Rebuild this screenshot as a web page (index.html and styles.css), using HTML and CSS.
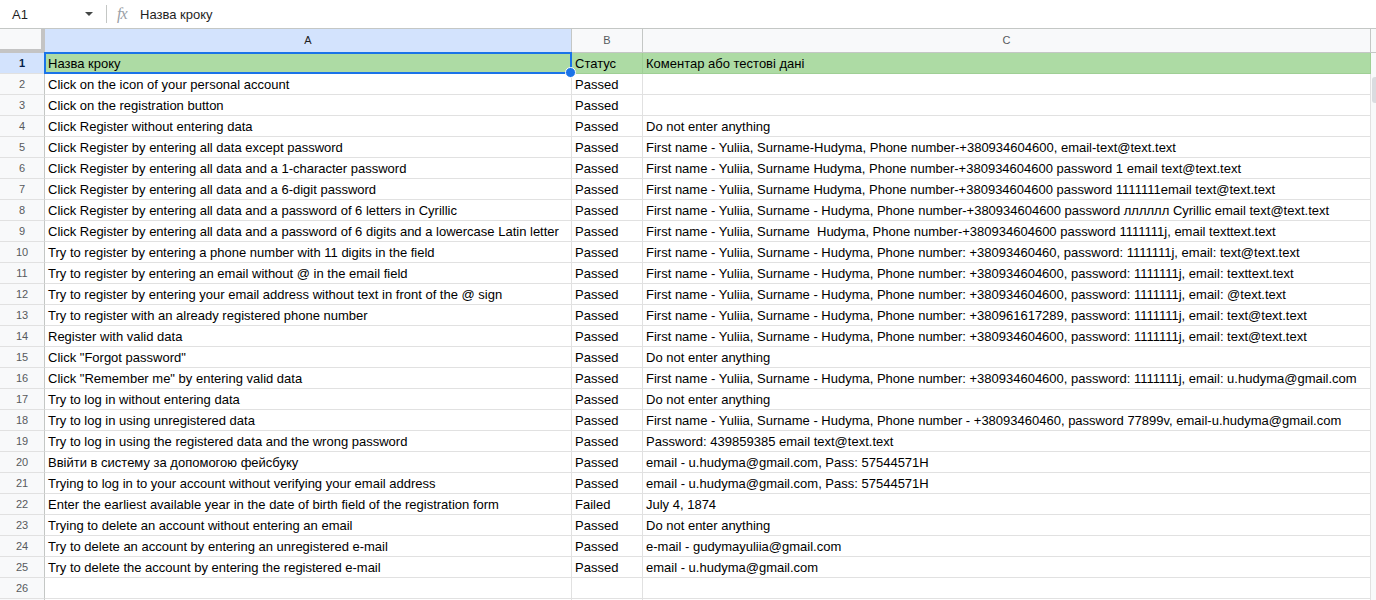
FILE: index.html
```html
<!DOCTYPE html>
<html lang="uk">
<head>
<meta charset="utf-8">
<title>Sheet</title>
<link rel="stylesheet" href="styles.css">
</head>
<body>
<div class="formula-bar">
  <div class="namebox"><span class="ref">A1</span><span class="caret"></span></div>
  <div class="sep"></div>
  <div class="fx">fx</div>
  <div class="formula">Назва кроку</div>
</div>
<div class="sheet">
  <div class="grid">
    <div class="corner"></div>
    <div class="colhead sel">A</div>
    <div class="colhead">B</div>
    <div class="colhead">C</div>

    <div class="rowhead sel">1</div>
    <div class="cell green a1">Назва кроку</div>
    <div class="cell green">Статус</div>
    <div class="cell green">Коментар або тестові дані</div>

    <div class="rowhead">2</div><div class="cell">Click on the icon of your personal account</div><div class="cell">Passed</div><div class="cell"></div>
    <div class="rowhead">3</div><div class="cell">Click on the registration button</div><div class="cell">Passed</div><div class="cell"></div>
    <div class="rowhead">4</div><div class="cell">Click Register without entering data</div><div class="cell">Passed</div><div class="cell">Do not enter anything</div>
    <div class="rowhead">5</div><div class="cell">Click Register by entering all data except password</div><div class="cell">Passed</div><div class="cell">First name - Yuliia, Surname-Hudyma, Phone number-+380934604600, email-text@text.text</div>
    <div class="rowhead">6</div><div class="cell">Click Register by entering all data and a 1-character password</div><div class="cell">Passed</div><div class="cell">First name - Yuliia, Surname Hudyma, Phone number-+380934604600 password 1 email text@text.text</div>
    <div class="rowhead">7</div><div class="cell">Click Register by entering all data and a 6-digit password</div><div class="cell">Passed</div><div class="cell">First name - Yuliia, Surname Hudyma, Phone number-+380934604600 password 1111111email text@text.text</div>
    <div class="rowhead">8</div><div class="cell">Click Register by entering all data and a password of 6 letters in Cyrillic</div><div class="cell">Passed</div><div class="cell">First name - Yuliia, Surname - Hudyma, Phone number-+380934604600 password лллллл Cyrillic email text@text.text</div>
    <div class="rowhead">9</div><div class="cell">Click Register by entering all data and a password of 6 digits and a lowercase Latin letter</div><div class="cell">Passed</div><div class="cell">First name - Yuliia, Surname  Hudyma, Phone number-+380934604600 password 1111111j, email texttext.text</div>
    <div class="rowhead">10</div><div class="cell">Try to register by entering a phone number with 11 digits in the field</div><div class="cell">Passed</div><div class="cell">First name - Yuliia, Surname - Hudyma, Phone number: +38093460460, password: 1111111j, email: text@text.text</div>
    <div class="rowhead">11</div><div class="cell">Try to register by entering an email without @ in the email field</div><div class="cell">Passed</div><div class="cell">First name - Yuliia, Surname - Hudyma, Phone number: +380934604600, password: 1111111j, email: texttext.text</div>
    <div class="rowhead">12</div><div class="cell">Try to register by entering your email address without text in front of the @ sign</div><div class="cell">Passed</div><div class="cell">First name - Yuliia, Surname - Hudyma, Phone number: +380934604600, password: 1111111j, email: @text.text</div>
    <div class="rowhead">13</div><div class="cell">Try to register with an already registered phone number</div><div class="cell">Passed</div><div class="cell">First name - Yuliia, Surname - Hudyma, Phone number: +380961617289, password: 1111111j, email: text@text.text</div>
    <div class="rowhead">14</div><div class="cell">Register with valid data</div><div class="cell">Passed</div><div class="cell">First name - Yuliia, Surname - Hudyma, Phone number: +380934604600, password: 1111111j, email: text@text.text</div>
    <div class="rowhead">15</div><div class="cell">Click "Forgot password"</div><div class="cell">Passed</div><div class="cell">Do not enter anything</div>
    <div class="rowhead">16</div><div class="cell">Click "Remember me" by entering valid data</div><div class="cell">Passed</div><div class="cell">First name - Yuliia, Surname - Hudyma, Phone number: +380934604600, password: 1111111j, email: u.hudyma@gmail.com</div>
    <div class="rowhead">17</div><div class="cell">Try to log in without entering data</div><div class="cell">Passed</div><div class="cell">Do not enter anything</div>
    <div class="rowhead">18</div><div class="cell">Try to log in using unregistered data</div><div class="cell">Passed</div><div class="cell">First name - Yuliia, Surname - Hudyma, Phone number - +38093460460, password 77899v, email-u.hudyma@gmail.com</div>
    <div class="rowhead">19</div><div class="cell">Try to log in using the registered data and the wrong password</div><div class="cell">Passed</div><div class="cell">Password: 439859385 email text@text.text</div>
    <div class="rowhead">20</div><div class="cell">Ввійти в систему за допомогою фейсбуку</div><div class="cell">Passed</div><div class="cell">email - u.hudyma@gmail.com, Pass: 57544571H</div>
    <div class="rowhead">21</div><div class="cell">Trying to log in to your account without verifying your email address</div><div class="cell">Passed</div><div class="cell">email - u.hudyma@gmail.com, Pass: 57544571H</div>
    <div class="rowhead">22</div><div class="cell">Enter the earliest available year in the date of birth field of the registration form</div><div class="cell">Failed</div><div class="cell">July 4, 1874</div>
    <div class="rowhead">23</div><div class="cell">Trying to delete an account without entering an email</div><div class="cell">Passed</div><div class="cell">Do not enter anything</div>
    <div class="rowhead">24</div><div class="cell">Try to delete an account by entering an unregistered e-mail</div><div class="cell">Passed</div><div class="cell">e-mail - gudymayuliia@gmail.com</div>
    <div class="rowhead">25</div><div class="cell">Try to delete the account by entering the registered e-mail</div><div class="cell">Passed</div><div class="cell">email - u.hudyma@gmail.com</div>
    <div class="rowhead">26</div><div class="cell"></div><div class="cell"></div><div class="cell"></div>
    <div class="rowhead"></div><div class="cell"></div><div class="cell"></div><div class="cell"></div>
  </div>
  <div class="vscroll">
    <div class="vscroll-top"></div>
    <div class="thumb"></div>
  </div>
</div>
</body>
</html>
```

FILE: styles.css
```css
* { box-sizing: border-box; }
html, body { margin: 0; padding: 0; background: #fff; overflow: hidden; }
body {
  font-family: "Liberation Sans", Arial, sans-serif;
  font-size: 13px;
  color: #000;
  width: 1376px;
  height: 600px;
}

.formula-bar {
  height: 29px;
  border-bottom: 1px solid #c4c7c5;
  display: flex;
  align-items: center;
}
.namebox {
  width: 106px;
  display: flex;
  align-items: center;
  padding-left: 12px;
}
.ref { font-size: 13px; color: #1f1f1f; }
.caret {
  margin-left: auto;
  margin-right: 13px;
  width: 0; height: 0;
  border-left: 4px solid transparent;
  border-right: 4px solid transparent;
  border-top: 4px solid #444746;
}
.sep { width: 1px; height: 18px; background: #c4c7c5; }
.fx {
  margin-left: 10px;
  width: 23px;
  font-family: "Liberation Serif", "Times New Roman", serif;
  font-style: italic;
  font-size: 16px;
  color: #9aa0a6;
  letter-spacing: -1px;
  line-height: 1;
}
.formula { color: #1f1f1f; }

.sheet { display: flex; }
.grid {
  display: grid;
  grid-template-columns: 45px 527px 71px 728px;
  grid-auto-rows: 21px;
  grid-template-rows: 24px;
  width: 1371px;
}
.corner {
  background: #f8f9fa;
  border-right: 4px solid #c4c4c4;
  border-bottom: 4px solid #c4c4c4;
}
.colhead {
  background: #f8f9fa;
  border-right: 1px solid #c4c7c5;
  border-bottom: 1px solid #c4c7c5;
  font-size: 11px;
  color: #575a5d;
  text-align: center;
  line-height: 23px;
}
.colhead.sel { background: #d3e3fd; color: #1f1f1f; }
.rowhead {
  background: #f8f9fa;
  border-right: 1px solid #c4c7c5;
  border-bottom: 1px solid #e1e1e1;
  font-size: 11px;
  color: #575a5d;
  text-align: center;
  line-height: 20px;
}
.rowhead.sel { background: #d3e3fd; font-weight: bold; color: #041e49; }
.cell {
  border-right: 1px solid #e1e1e1;
  border-bottom: 1px solid #e1e1e1;
  padding-left: 3px;
  line-height: 21px;
  white-space: pre;
  overflow: hidden;
  color: #000;
}
.cell.green { background: #addba4; border-bottom-color: #9fcf95; border-right-color: #9fcf95; }
.a1 { position: relative; overflow: visible; }
.a1::after {
  content: "";
  position: absolute;
  left: -1px; top: -1px; right: -1px; bottom: -1px;
  border: 2px solid #1a73e8;
}
.a1::before {
  content: "";
  position: absolute;
  right: -5px; bottom: -5px;
  width: 9px; height: 9px;
  border-radius: 50%;
  background: #1a73e8;
  border: 1px solid #fff;
  z-index: 2;
}

.vscroll {
  width: 5px;
  background: #f8f9fa;
  height: 571px;
}
.vscroll-top { height: 24px; background: #f8f9fa; border-bottom: 1px solid #c4c7c5; }
.thumb {
  margin-top: 24px;
  margin-left: 1px;
  width: 6px;
  height: 26px;
  border-radius: 4px;
  background: #dadce0;
}
```
